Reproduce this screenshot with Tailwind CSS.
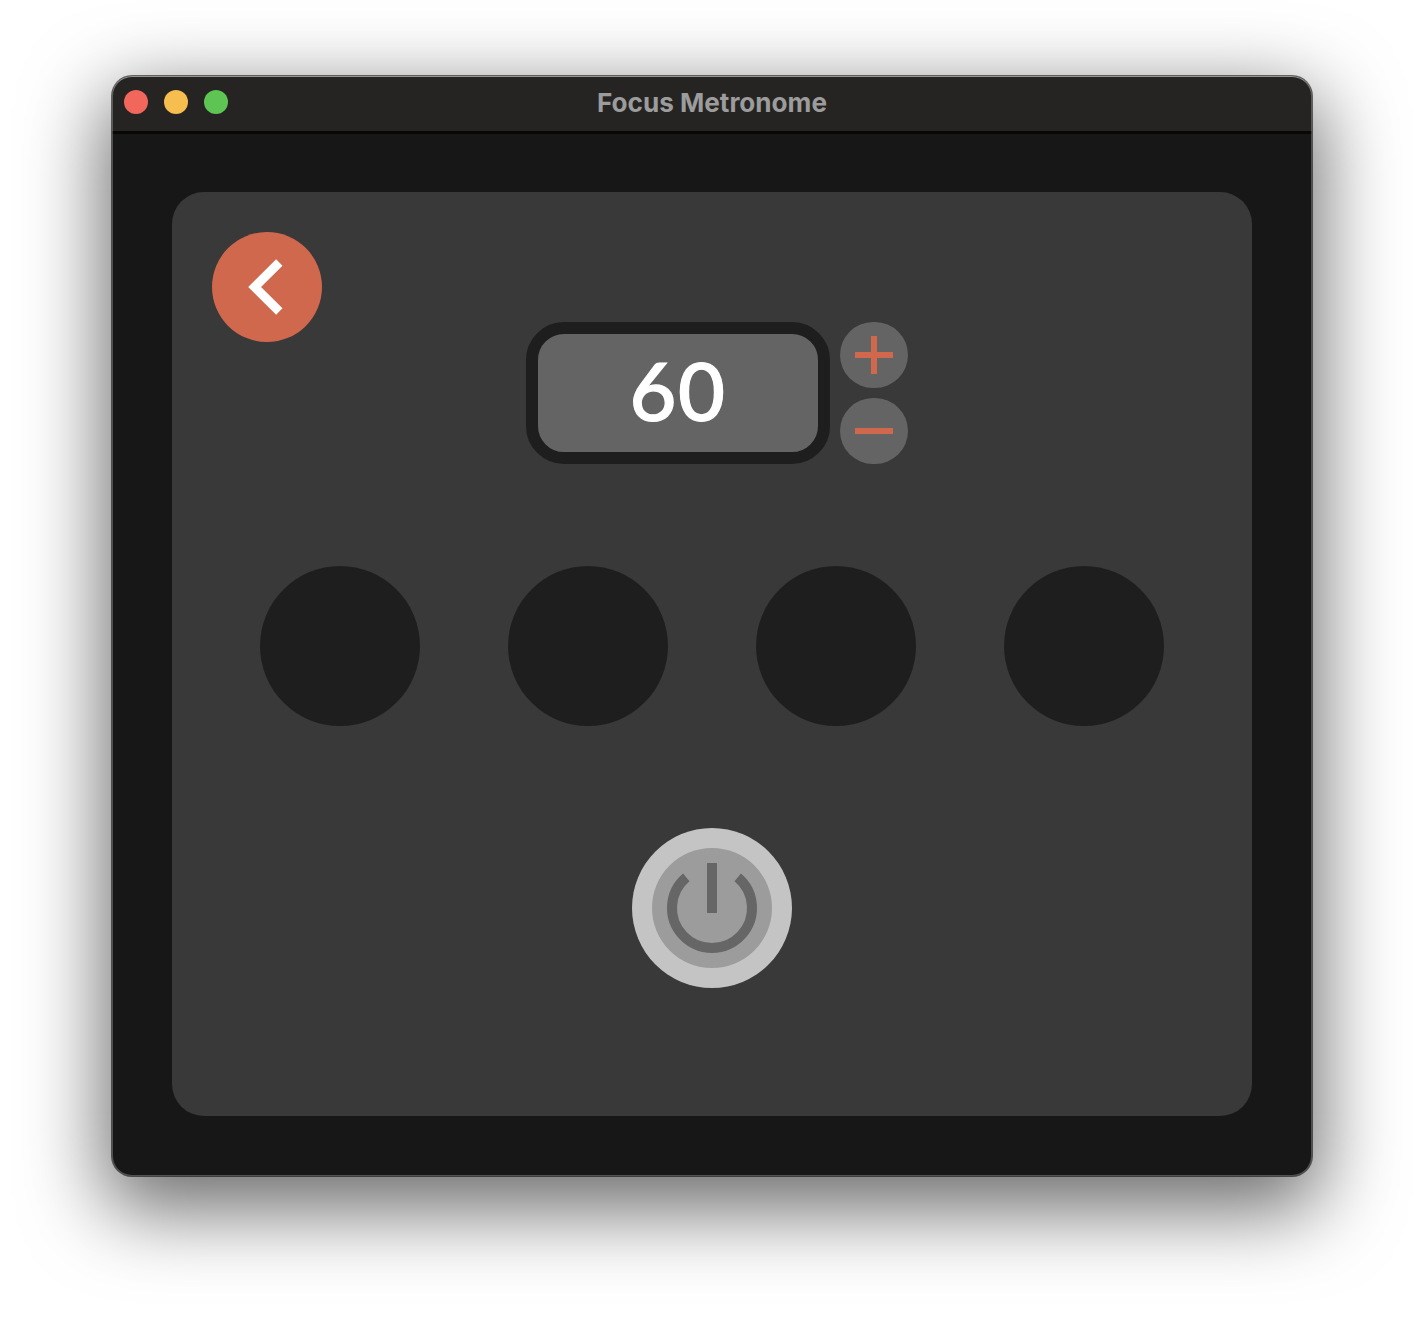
<!DOCTYPE html>
<html lang="en">
  <head>
    <meta charset="UTF-8" />
    <title>Focus Metronome</title>
    <script src="https://cdn.jsdelivr.net/npm/@tailwindcss/browser@4"></script>
  </head>
  <body class="bg-white h-[1324px] overflow-hidden font-['Inter',sans-serif]">
    <div class="pt-[76px] pl-[112px]">
      <!-- Window -->
      <div class="relative w-[1200px] h-[1100px] rounded-[20px] bg-[#171717] flex flex-col shadow-[0_0_0_1px_rgba(0,0,0,0.55),0_26px_80px_8px_rgba(0,0,0,0.58)]">
        <!-- Title bar -->
        <div class="relative h-[58px] shrink-0 flex items-center justify-center rounded-t-[20px] bg-[#252423] border-b-[3px] border-[#080808]">
          <div class="absolute left-3 top-[14px] flex gap-4">
            <span class="size-6 rounded-full bg-[#f1675c]"></span>
            <span class="size-6 rounded-full bg-[#f6bd4f]"></span>
            <span class="size-6 rounded-full bg-[#5ec453]"></span>
          </div>
          <span class="text-[26.1px] leading-none font-bold text-[#9c9c9c]">Focus Metronome</span>
        </div>

        <!-- Content -->
        <div class="flex-1 px-[60px] pt-[58px] pb-[60px] flex">
          <div class="relative flex-1 rounded-[32px] bg-[#393939] flex flex-col items-center pt-[130px]">
            <!-- Back -->
            <button class="absolute left-10 top-10 size-[110px] rounded-full bg-[#d0684d]">
              <svg viewBox="0 0 110 110" class="size-[110px]" fill="none" stroke="#fff" stroke-width="9">
                <polyline points="67.3,30.5 42.6,55 67.3,79.5" />
              </svg>
            </button>

            <!-- BPM stepper -->
            <div class="flex gap-[10px] ml-[10px]">
              <div class="w-[304px] h-[142px] rounded-[38px] border-[12px] border-[#1e1e1e] bg-[#646464] flex items-center justify-center">
                <span class="text-[81px] leading-none font-medium tracking-[1.5px] text-white font-['Lato',sans-serif] [-webkit-text-stroke:1.2px_white] -mt-2">60</span>
              </div>
              <div class="flex flex-col gap-[10px]">
                <button class="w-[68px] h-[66px] rounded-full bg-[#646464] flex items-center justify-center">
                  <svg width="38" height="38" viewBox="0 0 38 38" fill="#d0684d">
                    <rect x="16" y="0" width="6" height="38" />
                    <rect x="0" y="16" width="38" height="6" />
                  </svg>
                </button>
                <button class="w-[68px] h-[66px] rounded-full bg-[#646464] flex items-center justify-center">
                  <svg width="38" height="6" viewBox="0 0 38 6" fill="#d0684d">
                    <rect width="38" height="6" />
                  </svg>
                </button>
              </div>
            </div>

            <!-- Beats -->
            <div class="mt-[102px] flex gap-[88px]">
              <div class="size-40 rounded-full bg-[#1e1e1e]"></div>
              <div class="size-40 rounded-full bg-[#1e1e1e]"></div>
              <div class="size-40 rounded-full bg-[#1e1e1e]"></div>
              <div class="size-40 rounded-full bg-[#1e1e1e]"></div>
            </div>

            <!-- Power -->
            <button class="mt-[102px] size-40 rounded-full bg-[#c4c4c4] flex items-center justify-center">
              <span class="size-[120px] rounded-full bg-[#9c9c9c] block">
                <svg viewBox="0 0 120 120" class="size-[120px]" fill="none" stroke="#666" stroke-width="10">
                  <path d="M34.3 29.3A40 40 0 1 0 85.7 29.3" />
                  <path d="M60 15V65" />
                </svg>
              </span>
            </button>
          </div>
        </div>

        <!-- Window edge highlight, sits over the title bar -->
        <div class="absolute inset-0 rounded-[20px] pointer-events-none shadow-[inset_0_0_0_1px_rgba(255,255,255,0.25),inset_0_1px_0_rgba(255,255,255,0.35)]"></div>
      </div>
    </div>
  </body>
</html>
